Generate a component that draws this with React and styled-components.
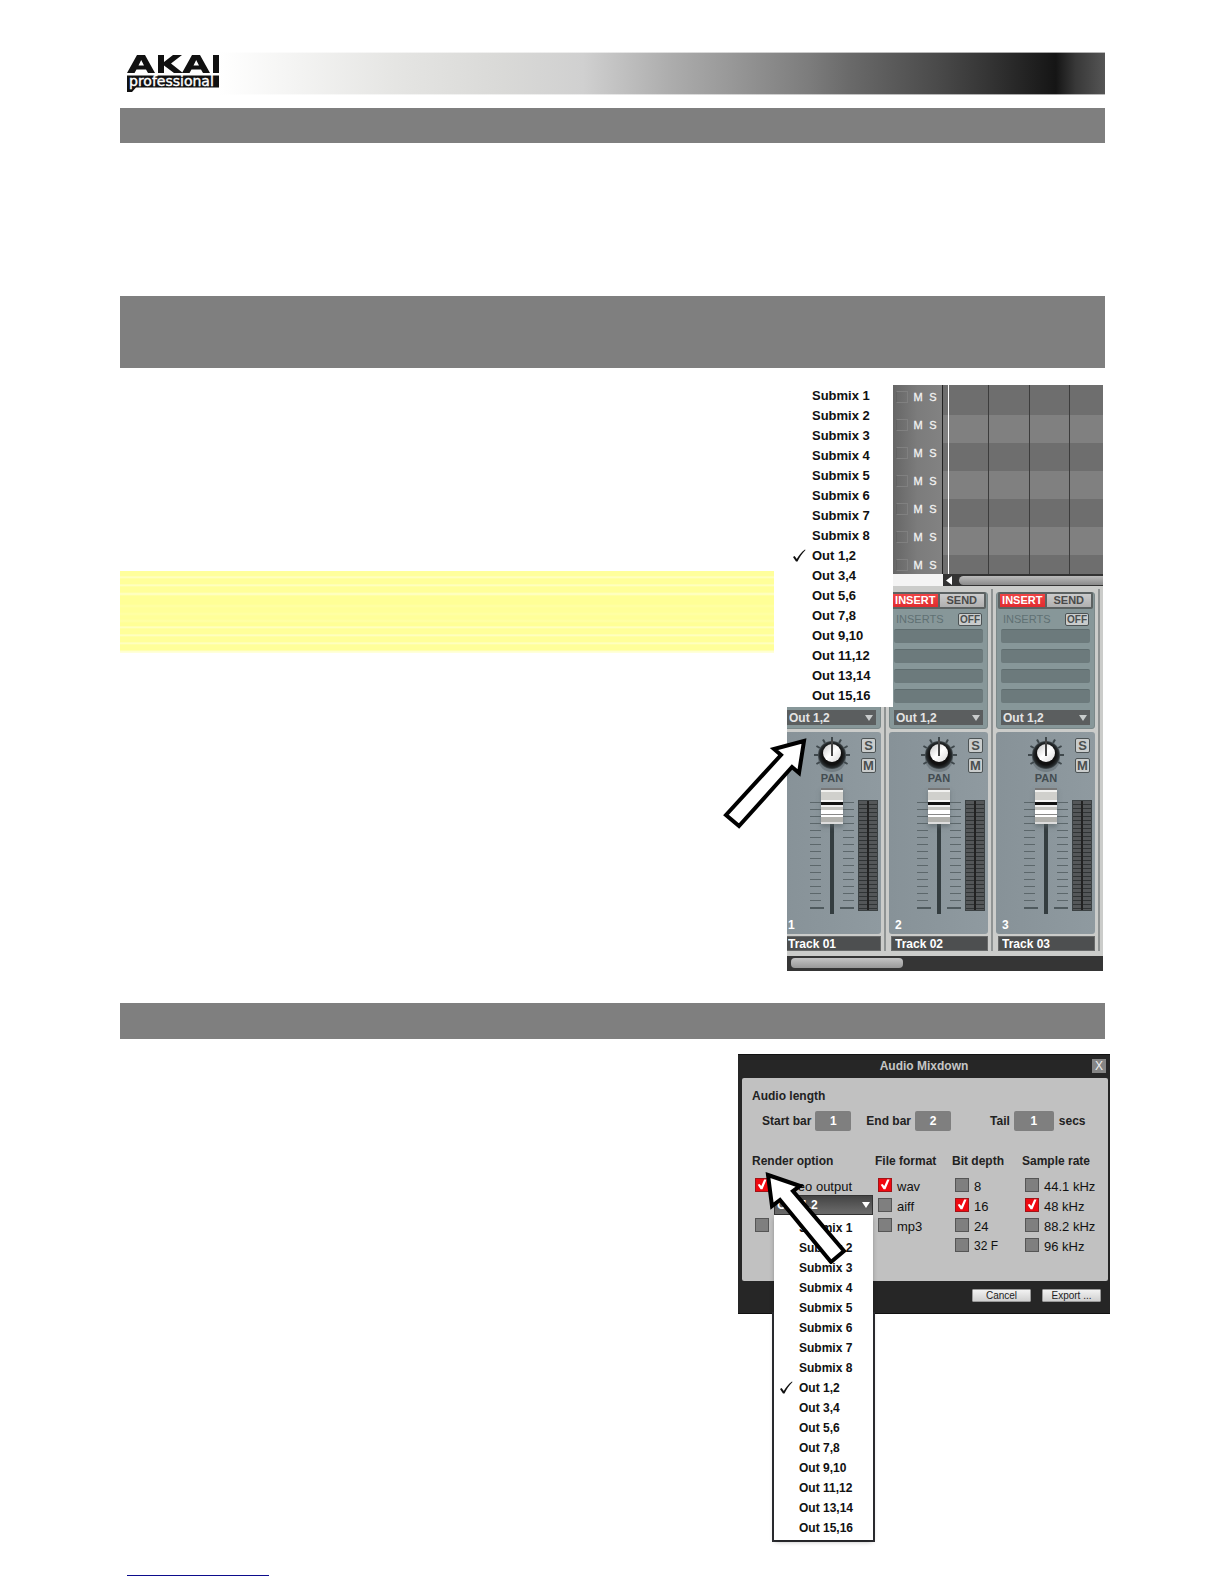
import React from "react";
import styled, { createGlobalStyle } from "styled-components";

const outputs = [
  "Submix 1", "Submix 2", "Submix 3", "Submix 4",
  "Submix 5", "Submix 6", "Submix 7", "Submix 8",
  "Out 1,2", "Out 3,4", "Out 5,6", "Out 7,8",
  "Out 9,10", "Out 11,12", "Out 13,14", "Out 15,16",
];
const selectedOutput = "Out 1,2";

const Global = createGlobalStyle`
  *, *::before, *::after { box-sizing: border-box; }
  body { margin: 0; background: #fff; font-family: "Liberation Sans", Arial, sans-serif; }
  button, input, select { font-family: inherit; margin: 0; padding: 0; border: 0; border-radius: 0; }
`;

/* ---------- page ---------- */

const Page = styled.div`
  display: flex;
  flex-direction: column;
  padding: 52px 119px 8px 120px;
`;

const Header = styled.header`
  display: flex;
  align-items: center;
  height: 43px;
  padding-left: 7px;
  margin-bottom: 13px;
  background:
    linear-gradient(#fff9, #fff9) 0 0 / 100% 1px no-repeat,
    linear-gradient(#fff9, #fff9) 0 100% / 100% 1px no-repeat,
    linear-gradient(90deg, #fff 10%, #f5f5f4 17%, #e5e5e3 28%, #dadad8 38%, #d0d0d0 47%, #c4c4c4 50%, #acacac 56%, #989898 62%, #7c7c7c 70%, #6a6a6a 74%, #4a4a4a 83%, #353535 88%, #151515 95%, #383838 97%, #555 100%);
`;

const Logo = styled.svg`
  width: 92px;
  height: 37px;
`;

const SectionBar = styled.div`
  height: ${(p) => p.$height}px;
  background: #7f7f7f;
`;

const BlankText = styled.div`
  height: 153px;
`;

const Row = styled.section`
  display: flex;
  align-items: flex-start;
  justify-content: space-between;
  gap: 13px;
  padding: ${(p) => p.$pad};
`;

const Note = styled.aside`
  flex: 1;
  height: 82px;
  margin-top: 186px;
  background: linear-gradient(
    #ffff9c 5px, #ffffcc 6px, #ffff99 8px 13px, #ffffcc 14px, #ffff99 16px 21px,
    #ffffcc 23px, #ffff96 25px 33px, #ffffa6 35px, #ffff99 37px 41px, #ffffa6 43px,
    #ffff99 45px 48px, #ffffa8 50px, #ffff96 52px 55px, #ffffcc 56px, #ffff99 58px 63px,
    #ffffcc 64px, #ffff99 66px 71px, #ffffcc 72px, #ffff99 74px 79px, #ffffcc 80px, #ffffe0 82px
  );
`;

const FooterLink = styled.a`
  width: 142px;
  height: 20px;
  margin-left: 7px;
  border-bottom: 1px solid #0c0c8c;
`;

/* ---------- output menu ---------- */

const MenuList = styled.div`
  display: flex;
  flex-direction: column;
  background: #fff;
`;

const MenuItem = styled.button`
  display: grid;
  grid-template-columns: 25px auto;
  align-items: center;
  height: 20px;
  background: none;
  color: #111;
  font-size: ${(p) => p.$size}px;
  font-weight: bold;
  line-height: 20px;
  text-align: left;
  white-space: nowrap;
`;

const Tick = styled.svg`
  width: 14px;
  height: 14px;
  justify-self: end;
  margin-right: 6px;
`;

function OutputMenu({ size }) {
  return (
    <MenuList role="menu" aria-label="Output">
      {outputs.map((name) => (
        <MenuItem key={name} role="menuitemradio" aria-checked={name === selectedOutput} $size={size}>
          {name === selectedOutput ? (
            <Tick viewBox="0 0 14 14" aria-hidden="true">
              <path d="M1 8 2.600 7 4.800 10C6.600 6.500 9.500 3 13 0.500L13.500 1C10 4.600 7.500 8.500 5.500 12.500H4Z" fill="#111" />
            </Tick>
          ) : <span />}
          <span>{name}</span>
        </MenuItem>
      ))}
    </MenuList>
  );
}

/* ---------- mixer ---------- */

const MixerFigure = styled.figure`
  position: relative;
  flex: none;
  width: 316px;
  margin: 0 2px 0 0;
`;

const MixerWindow = styled.div`
  overflow: hidden;
  background: #cbccca;
`;

const MixerMenu = styled.div`
  position: absolute;
  left: 0;
  top: 0;
  width: 106px;
  height: 322px;
  padding-top: 1px;
  background: #fff;
`;

const Arrange = styled.div`
  display: grid;
  grid-template-columns: 49px 1fr;
  height: 189px;
  margin-left: 106px;
  overflow: hidden;
`;

const LaneHeads = styled.div`
  background: linear-gradient(90deg, #666, #7c7c7c 50%, #828282);
`;

const LaneHead = styled.div`
  display: flex;
  align-items: center;
  height: 28px;
  padding: 0 0 5px 3px;
  gap: 1px;
`;

const ArmBox = styled.span`
  width: 12px;
  height: 12px;
  margin-right: 2px;
  border: 1px solid #808080;
  border-left-color: #626262;
`;

const LaneButton = styled.button`
  width: 14px;
  background: none;
  color: #f2f2f2;
  font-size: 11px;
  line-height: 12px;
  text-align: center;
  -webkit-text-stroke: 0.3px #f2f2f2;
`;

const Lanes = styled.div`
  position: relative;
  border-left: 1px solid #222;
`;

const Lane = styled.div`
  display: grid;
  grid-template-columns: 46px 41px 40px 1fr;
  height: 28px;
  background: ${(p) => (p.$light ? "#808080" : "#6e6e6e")};
  &:first-child { height: 30px; }
`;

const Cell = styled.span`
  border-right: 1px solid #3c3c3c;
  &:last-child { border: 0; }
`;

const Playhead = styled.span`
  position: absolute;
  left: 5px;
  top: 0;
  bottom: 0;
  width: 1px;
  background: #fff;
`;

const ArrangeScroll = styled.div`
  display: flex;
  align-items: center;
  height: 12px;
  margin-left: 106px;
  background: linear-gradient(90deg, #f4f4f4 50px, #333 50px);
  padding-left: 52px;
`;

const ScrollArrow = styled.svg`
  width: 8px;
  height: 9px;
  margin-right: 6px;
`;

const ArrangeThumb = styled.div`
  flex: 1;
  height: 9px;
  border-radius: 5px 0 0 5px;
  background: linear-gradient(#bbb, #8a8a8a);
`;

const Strips = styled.div`
  display: flex;
  gap: 8px;
  width: 500px;
  margin-left: -5px;
  padding: 6px 0 5px;
`;

const Strip = styled.div`
  position: relative;
  flex: none;
  width: 99px;
  &::after {
    content: "";
    position: absolute;
    left: 102px;
    top: -3px;
    bottom: 0;
    width: 2px;
    background: #8f9393;
  }
`;

const FxPanel = styled.div`
  height: 137px;
  padding: 0 4px;
  border: 1px solid #7b8889;
  border-radius: 3px;
  background: #879799;
`;

const Tabs = styled.div`
  display: grid;
  grid-template-columns: 1fr 1fr;
  gap: 2px;
  height: 17px;
  margin: -1px -3px 0;
  padding: 2px;
  border-radius: 2px;
  background: #5c6262;
`;

const TabButton = styled.button`
  background: ${(p) => (p.$on ? "linear-gradient(#f04444, #e02c30)" : "linear-gradient(#ccc, #b0b0b0)")};
  color: ${(p) => (p.$on ? "#fff" : "#4a4a4a")};
  font-size: 11px;
  font-weight: bold;
  line-height: 13px;
  text-align: center;
`;

const InsertsRow = styled.div`
  display: flex;
  align-items: center;
  justify-content: space-between;
  height: 20px;
  padding: 0 1px 0 2px;
  color: #5f7073;
  font-size: 11px;
  line-height: 13px;
`;

const SmallButton = styled.button`
  width: ${(p) => p.$width}px;
  height: ${(p) => p.$height}px;
  border: 1px solid #4c5355;
  border-radius: 2px;
  background: #c9cccc;
  color: #4a4f50;
  font-size: ${(p) => p.$size}px;
  font-weight: bold;
  line-height: ${(p) => p.$height - 2}px;
  text-align: center;
`;

const Slot = styled.div`
  height: 14px;
  margin-bottom: 6px;
  border-top: 1px solid #5f6d6f;
  border-radius: 2px;
  background: #6c7a7c;
`;

const OutField = styled.label`
  display: flex;
  align-items: center;
  height: 15px;
  margin-top: 7px;
  padding: 0 3px 0 2px;
  background: #5b5e5f;
`;

const PlainSelect = styled.select`
  appearance: none;
  flex: 1;
  min-width: 0;
  background: none;
  color: ${(p) => p.$color};
  font-size: 12px;
  font-weight: bold;
  line-height: 14px;
`;

const Caret = styled.span`
  border: 4px solid transparent;
  border-top: 6px solid ${(p) => p.$color};
  border-bottom: 0;
`;

const ChannelPanel = styled.div`
  height: 202px;
  margin-top: 3px;
  padding: 4px 2px 0 28px;
  border-radius: 3px;
  background: linear-gradient(90deg, #879298, #8f9aa0);
`;

const PanRow = styled.div`
  display: flex;
  justify-content: space-between;
  height: 52px;
  padding-right: 3px;
`;

const PanBlock = styled.div`
  display: flex;
  flex-direction: column;
  align-items: center;
  width: 44px;
  color: #434c51;
  font-size: 11px;
  font-weight: bold;
  line-height: 12px;
`;

const Knob = styled.svg`
  width: 38px;
  height: 36px;
`;

const SoloMute = styled.div`
  display: flex;
  flex-direction: column;
  gap: 5px;
  padding-top: 2px;
`;

const FaderRow = styled.div`
  display: grid;
  grid-template-columns: 11px 22px 11px 20px;
  align-items: start;
  height: 128px;
`;

const Ticks = styled.div`
  height: 107px;
  margin-top: 14px;
  border-bottom: 2px solid #4f5a5e;
  background: repeating-linear-gradient(#5c676b 0 1px, transparent 1px 7px);
`;

const Fader = styled.input`
  appearance: none;
  writing-mode: vertical-lr;
  direction: rtl;
  width: 22px;
  height: 126px;
  background:
    linear-gradient(#4f5a5e, #4f5a5e) 0 119px / 3px 2px no-repeat,
    linear-gradient(#4f5a5e, #4f5a5e) 100% 119px / 3px 2px no-repeat,
    linear-gradient(#343d40, #343d40) 50% 10px / 4px 116px no-repeat;
  &::-webkit-slider-thumb {
    appearance: none;
    width: 22px;
    height: 36px;
    background: linear-gradient(
      #777 2px, #f2f2f0 2px 4px, #d0d0cc 4px 12px, #f5f5f5 12px 14px,
      #111 14px 17px, #eee 17px 19px, #c2c2be 19px 22px, #fff 22px 26px,
      #888 26px 27px, #fff 27px 29px, #b2b2ae 29px 34px, #ddd 34px
    );
    box-shadow: 0 3px 4px #59636888;
  }
`;

const Meter = styled.div`
  height: 111px;
  margin: 12px 0 0 4px;
  width: 20px;
  border: 1px solid #3c4244;
  background:
    linear-gradient(90deg, transparent 8px, #222 8px 10px, transparent 10px),
    repeating-linear-gradient(#545759 0 3px, #303435 3px 4px);
`;

const ChannelNumber = styled.div`
  margin: -1px 0 0 -22px;
  color: #fff;
  font-size: 12px;
  font-weight: bold;
  line-height: 20px;
`;

const TrackName = styled.input`
  display: block;
  width: 97px;
  height: 15px;
  margin: 2px 0 0 2px;
  padding-left: 3px;
  border: 1px solid #686a6a;
  background: #4d4f50;
  color: #fff;
  font-size: 12px;
  font-weight: bold;
`;

const MixerScroll = styled.div`
  height: 15px;
  padding: 2px 4px;
  background: #353535;
`;

const MixerThumb = styled.div`
  width: 112px;
  height: 10px;
  border-radius: 4px;
  background: linear-gradient(#c4c4c4, #999);
`;

const PointerArrow = styled.svg`
  position: absolute;
  left: ${(p) => p.$left}px;
  top: ${(p) => p.$top}px;
  width: 90px;
  height: 100px;
  pointer-events: none;
`;

function PanKnob() {
  const marks = [];
  for (let a = -120; a <= 120; a += 30) marks.push(a);
  return (
    <Knob viewBox="0 0 38 36" role="img" aria-label="Pan">
      <defs>
        <radialGradient id="knobBody">
          <stop offset="0.700" stopColor="#111" />
          <stop offset="0.900" stopColor="#252a2c" />
          <stop offset="1" stopColor="#4a5256" />
        </radialGradient>
        <linearGradient id="knobCap" x1="0" y1="0" x2="1" y2="1">
          <stop offset="0" stopColor="#c8c8c8" />
          <stop offset="0.500" stopColor="#fff" />
          <stop offset="1" stopColor="#d8d8d8" />
        </linearGradient>
      </defs>
      <ellipse cx="19" cy="23" rx="14" ry="13" fill="#5c666b" opacity="0.500" />
      {marks.map((a) => (
        <path key={a} d="M19 1V5" stroke="#3f484c" strokeWidth="2" transform={`rotate(${a} 19 19)`} />
      ))}
      <circle cx="19" cy="19" r="14" fill="url(#knobBody)" />
      <circle cx="19" cy="17" r="9" fill="url(#knobCap)" />
      <path d="M19 4V20" stroke="#444" strokeWidth="2" />
    </Knob>
  );
}

function MixerStrip({ number }) {
  return (
    <Strip>
      <FxPanel>
        <Tabs>
          <TabButton $on>INSERT</TabButton>
          <TabButton>SEND</TabButton>
        </Tabs>
        <InsertsRow>
          <span>INSERTS</span>
          <SmallButton $width={24} $height={13} $size={10}>OFF</SmallButton>
        </InsertsRow>
        <Slot /><Slot /><Slot /><Slot />
        <OutField>
          <PlainSelect $color="#e4e4e4" defaultValue={selectedOutput} aria-label={`Track ${number} output`}>
            {outputs.map((name) => <option key={name}>{name}</option>)}
          </PlainSelect>
          <Caret $color="#c9cccc" />
        </OutField>
      </FxPanel>
      <ChannelPanel>
        <PanRow>
          <PanBlock>
            <PanKnob />
            <span>PAN</span>
          </PanBlock>
          <SoloMute>
            <SmallButton $width={15} $height={15} $size={13}>S</SmallButton>
            <SmallButton $width={15} $height={15} $size={13}>M</SmallButton>
          </SoloMute>
        </PanRow>
        <FaderRow>
          <Ticks />
          <Fader type="range" min="0" max="100" defaultValue="100" aria-label={`Track ${number} volume`} />
          <Ticks />
          <Meter />
        </FaderRow>
        <ChannelNumber>{number}</ChannelNumber>
      </ChannelPanel>
      <TrackName defaultValue={`Track 0${number}`} aria-label={`Track ${number} name`} />
    </Strip>
  );
}

const NextStrip = styled.div`
  flex: none;
  width: 20px;
  background: #d4d5d3;
`;

function Mixer() {
  return (
    <MixerFigure>
      <MixerWindow>
        <Arrange>
          <LaneHeads>
            {[1, 2, 3, 4, 5, 6, 7].map((n) => (
              <LaneHead key={n}>
                <ArmBox />
                <LaneButton>M</LaneButton>
                <LaneButton>S</LaneButton>
              </LaneHead>
            ))}
          </LaneHeads>
          <Lanes>
            {[1, 2, 3, 4, 5, 6, 7].map((n) => (
              <Lane key={n} $light={n % 2 === 0}><Cell /><Cell /><Cell /><Cell /></Lane>
            ))}
            <Playhead />
          </Lanes>
        </Arrange>
        <ArrangeScroll>
          <ScrollArrow viewBox="0 0 8 9" aria-hidden="true"><path d="M7 0V9L1 4.500Z" fill="#fff" /></ScrollArrow>
          <ArrangeThumb />
        </ArrangeScroll>
        <Strips>
          <MixerStrip number={1} />
          <MixerStrip number={2} />
          <MixerStrip number={3} />
          <NextStrip />
        </Strips>
        <MixerScroll><MixerThumb /></MixerScroll>
      </MixerWindow>
      <MixerMenu><OutputMenu size={13} /></MixerMenu>
      <PointerArrow $left={-67} $top={345} viewBox="0 0 90 100" aria-hidden="true">
        <path d="M84 11 54 19 61 25 6 85 19 96 72 37 79 43Z" fill="#fff" stroke="#000" strokeWidth="4" />
      </PointerArrow>
    </MixerFigure>
  );
}

/* ---------- audio mixdown dialog ---------- */

const Dialog = styled.div`
  position: relative;
  flex: none;
  width: 372px;
  margin-right: -5px;
  padding: 0 2px 0 4px;
  border: 1px solid #111;
  border-width: 1px 0 1px 0;
  background: #262626;
  color: #222;
  font-size: 12px;
  font-weight: bold;
`;

const TitleBar = styled.div`
  display: grid;
  grid-template-columns: 14px 1fr 14px;
  align-items: center;
  height: 23px;
  padding: 0 2px 2px 0;
  color: #c6c6c6;
  text-align: center;
`;

const CloseButton = styled.button`
  height: 14px;
  background: #858585;
  color: #eee;
  font-size: 12px;
  line-height: 14px;
`;

const DialogBody = styled.div`
  height: 203px;
  padding: 10px 0 0 10px;
  border-radius: 2px;
  background: #c1c1c1;
`;

const Heading = styled.div`
  line-height: 16px;
`;

const LengthRow = styled.div`
  display: flex;
  align-items: center;
  height: 20px;
  margin: 7px 0 22px 10px;
`;

const Field = styled.label`
  display: flex;
  align-items: center;
  gap: 4px;
  margin-right: ${(p) => p.$after}px;
`;

const NumberInput = styled.input`
  width: ${(p) => p.$width}px;
  height: 20px;
  border-radius: 2px;
  background: #7f7f7f;
  color: #fff;
  font-size: 12px;
  font-weight: bold;
  text-align: center;
`;

const Options = styled.div`
  display: grid;
  grid-template-columns: 123px 77px 70px 1fr;
`;

const OptionList = styled.div`
  display: flex;
  flex-direction: column;
  padding: 7px 0 0 3px;
`;

const Option = styled.label`
  display: flex;
  align-items: center;
  gap: 5px;
  height: 20px;
  color: #111;
  font-size: ${(p) => (p.$small ? 12 : 13)}px;
  font-weight: normal;
  white-space: nowrap;
`;

const Box = styled.input`
  appearance: none;
  flex: none;
  width: 14px;
  height: 14px;
  margin-bottom: 3px;
  border: 1px solid #555;
  background: #7f7f7f;
  &:checked { background: #f00810; border-color: #a01418; }
  &:checked::before {
    content: "";
    display: block;
    width: 12px;
    height: 12px;
    background: #fff;
    clip-path: polygon(14% 52%, 30% 46%, 44% 62%, 68% 8%, 88% 8%, 54% 90%, 38% 90%);
  }
`;

const RenderOutput = styled.div`
  position: relative;
  height: 20px;
  margin-left: 19px;
`;

const DropField = styled.label`
  display: flex;
  align-items: center;
  width: 99px;
  height: 20px;
  margin-top: -1px;
  padding: 0 2px;
  border: 1px solid #333;
  background: linear-gradient(#444, #6c6c6c);
`;

const DropMenu = styled.div`
  position: absolute;
  left: -2px;
  top: 19px;
  width: 103px;
  padding: 0 2px 2px;
  background: linear-gradient(transparent 97px, #2e2f33 97px);
`;

const DropSurface = styled.div`
  height: 325px;
  padding-top: 3px;
  background: #fff;
  box-shadow: 0 2px 5px -1px #0006;
`;

const DialogFooter = styled.div`
  display: flex;
  align-items: center;
  justify-content: flex-end;
  gap: 11px;
  height: 32px;
  padding: 0 7px 3px 0;
`;

const FooterButton = styled.button`
  width: 59px;
  height: 13px;
  border: 1px solid #999;
  border-radius: 1px;
  background: linear-gradient(#f2f2f2, #d0d0d0);
  color: #222;
  font-size: 10px;
  line-height: 11px;
`;

function Check({ label, checked, small }) {
  return (
    <Option $small={small}>
      <Box type="checkbox" defaultChecked={checked} />
      <span>{label}</span>
    </Option>
  );
}

function OptionGroup({ title, items }) {
  return (
    <div>
      <Heading>{title}</Heading>
      <OptionList>
        {items.map((item) => <Check key={item.label} {...item} />)}
      </OptionList>
    </div>
  );
}

function Mixdown() {
  return (
    <Dialog role="dialog" aria-label="Audio Mixdown">
      <TitleBar>
        <span />
        <span>Audio Mixdown</span>
        <CloseButton aria-label="Close">X</CloseButton>
      </TitleBar>
      <DialogBody>
        <Heading>Audio length</Heading>
        <LengthRow>
          <Field $after={15}>Start bar<NumberInput $width={36} defaultValue="1" /></Field>
          <Field $after={39}>End bar<NumberInput $width={36} defaultValue="2" /></Field>
          <Field $after={5}>Tail<NumberInput $width={40} defaultValue="1" /></Field>
          <span>secs</span>
        </LengthRow>
        <Options>
          <div>
            <Heading>Render option</Heading>
            <OptionList>
              <Check label="Stereo output" checked />
              <RenderOutput>
                <DropField>
                  <PlainSelect $color="#fff" defaultValue={selectedOutput} aria-label="Render output">
                    {outputs.map((name) => <option key={name}>{name}</option>)}
                  </PlainSelect>
                  <Caret $color="#fff" />
                </DropField>
                <DropMenu>
                  <DropSurface><OutputMenu size={12} /></DropSurface>
                </DropMenu>
              </RenderOutput>
              <Option><Box type="checkbox" aria-label="Separate tracks" /></Option>
            </OptionList>
          </div>
          <OptionGroup title="File format" items={[{ label: "wav", checked: true }, { label: "aiff" }, { label: "mp3" }]} />
          <OptionGroup title="Bit depth" items={[{ label: "8" }, { label: "16", checked: true }, { label: "24" }, { label: "32 F", small: true }]} />
          <OptionGroup title="Sample rate" items={[{ label: "44.1 kHz" }, { label: "48 kHz", checked: true }, { label: "88.2 kHz" }, { label: "96 kHz" }]} />
        </Options>
      </DialogBody>
      <DialogFooter>
        <FooterButton>Cancel</FooterButton>
        <FooterButton>Export ...</FooterButton>
      </DialogFooter>
      <PointerArrow $left={22} $top={109} viewBox="0 0 90 100" aria-hidden="true">
        <path d="M8 11 40 22 33 27 84 87 71 98 20 36 12 42Z" fill="#fff" stroke="#000" strokeWidth="4" />
      </PointerArrow>
    </Dialog>
  );
}

const LogoWord = styled.text`
  font-family: "DejaVu Sans", Verdana, sans-serif;
  font-size: 14px;
`;

function AkaiLogo() {
  return (
    <Logo viewBox="0 0 92 37" role="img" aria-label="AKAI professional">
      <g fill="#111">
        <path d="M0 18 10 0H18L28 18H21L19 14.500H9.500L7.500 18ZM11.500 10.500H17L14.200 5Z" fillRule="evenodd" />
        <path d="M31 0H37V7L46 0H55L44 8.500 56 18H47L37 10.500V18H31Z" />
        <path d="M55 18 65 0H73L83 18H76L74 14.500H64.500L62.500 18ZM66.500 10.500H72L69.200 5Z" fillRule="evenodd" />
        <path d="M86 0H92V18H86Z" />
        <path d="M0 20.500H92V32.500H9L5 37H0Z" />
      </g>
      <LogoWord x="2" y="31" fill="#fff" stroke="#fff" strokeWidth="0.400">professional</LogoWord>
    </Logo>
  );
}

export default function App() {
  return (
    <>
      <Global />
      <Page>
        <Header><AkaiLogo /></Header>
        <SectionBar $height={35} />
        <BlankText />
        <SectionBar $height={72} />
        <Row $pad="17px 0 32px">
          <Note />
          <Mixer />
        </Row>
        <SectionBar $height={36} />
        <Row $pad="15px 0 242px">
          <span />
          <Mixdown />
        </Row>
        <FooterLink href="#contents" aria-label="Contents" />
      </Page>
    </>
  );
}
